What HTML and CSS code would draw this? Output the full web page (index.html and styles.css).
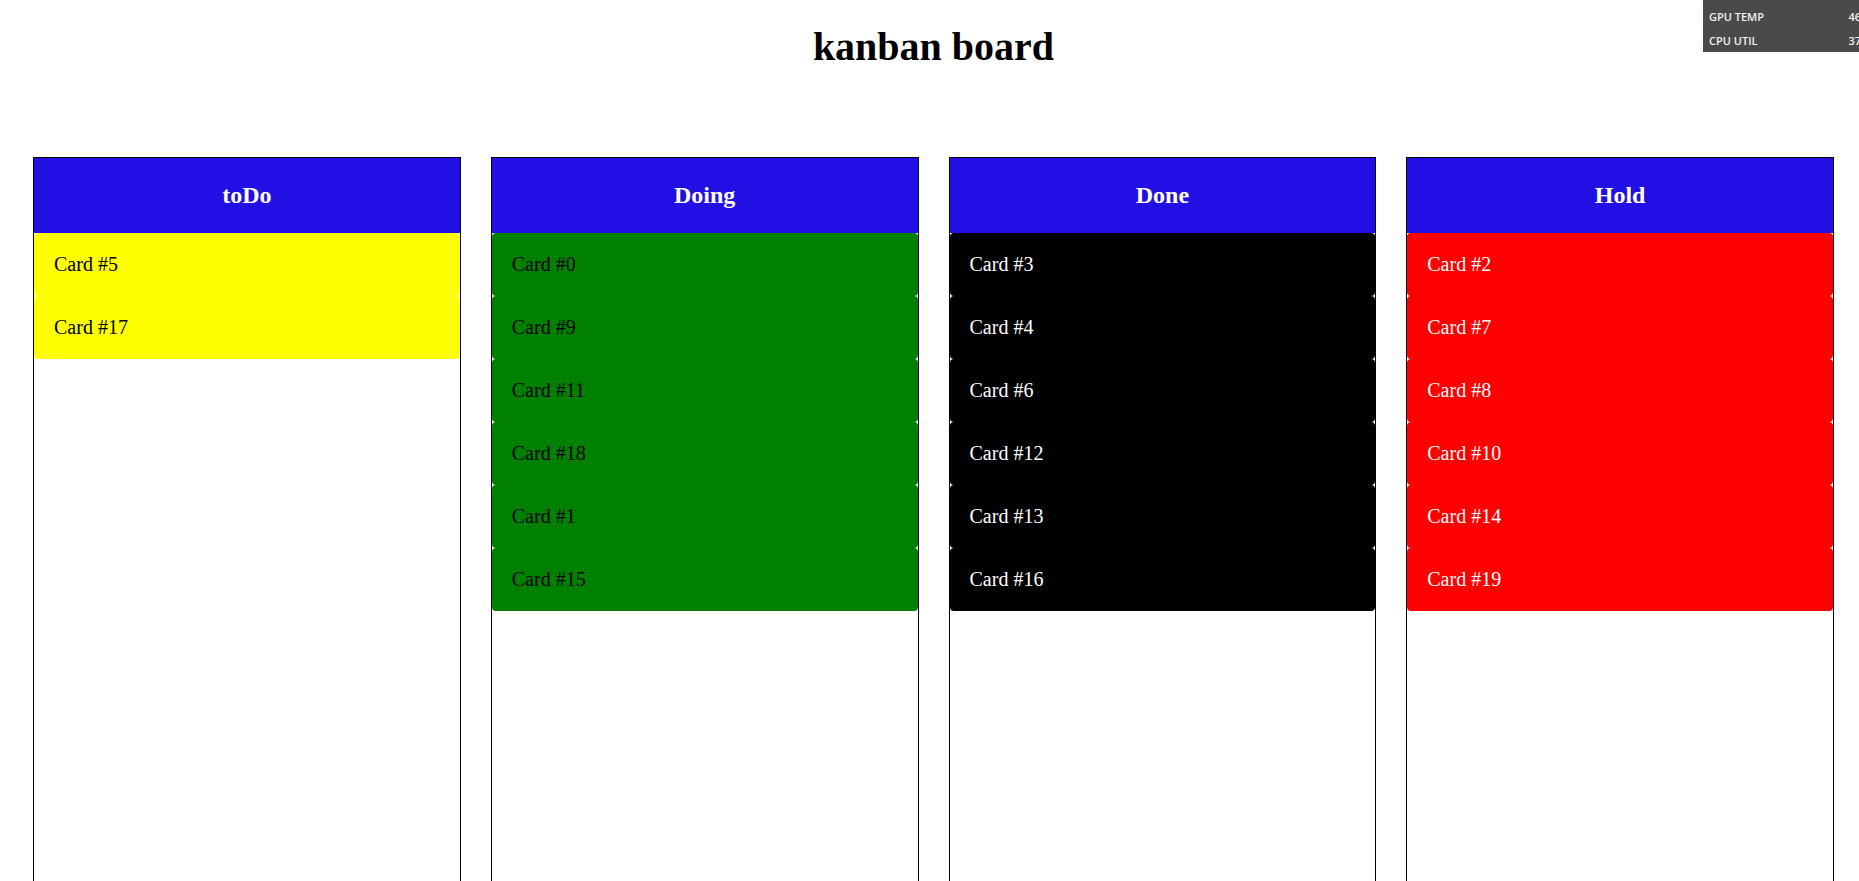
FILE: index.html
```html
<!DOCTYPE html>
<html lang="en">
<head>
<meta charset="utf-8">
<title>kanban board</title>
<link rel="stylesheet" href="styles.css">
</head>
<body>
<div class="page">
  <h1 class="title">kanban board</h1>
  <div class="board">
    <section class="column">
      <h2 class="column-title">toDo</h2>
      <div class="card-list">
        <div class="card card--todo">Card #5</div>
        <div class="card card--todo">Card #17</div>
      </div>
    </section>
    <section class="column">
      <h2 class="column-title">Doing</h2>
      <div class="card-list">
        <div class="card card--doing">Card #0</div>
        <div class="card card--doing">Card #9</div>
        <div class="card card--doing">Card #11</div>
        <div class="card card--doing">Card #18</div>
        <div class="card card--doing">Card #1</div>
        <div class="card card--doing">Card #15</div>
      </div>
    </section>
    <section class="column">
      <h2 class="column-title">Done</h2>
      <div class="card-list">
        <div class="card card--done">Card #3</div>
        <div class="card card--done">Card #4</div>
        <div class="card card--done">Card #6</div>
        <div class="card card--done">Card #12</div>
        <div class="card card--done">Card #13</div>
        <div class="card card--done">Card #16</div>
      </div>
    </section>
    <section class="column">
      <h2 class="column-title">Hold</h2>
      <div class="card-list">
        <div class="card card--hold">Card #2</div>
        <div class="card card--hold">Card #7</div>
        <div class="card card--hold">Card #8</div>
        <div class="card card--hold">Card #10</div>
        <div class="card card--hold">Card #14</div>
        <div class="card card--hold">Card #19</div>
      </div>
    </section>
  </div>
</div>
<aside class="hw-overlay">
  <div class="hw-row"><span>GPU TEMP</span><span>46</span></div>
  <div class="hw-row"><span>CPU UTIL</span><span>37</span></div>
</aside>
</body>
</html>
```
FILE: styles.css
```css
html, body {
  margin: 0;
  height: 100%;
  overflow: hidden;
  background: #ffffff;
}

body {
  font-family: "Liberation Serif", "Times New Roman", serif;
  color: #000000;
}

.page {
  padding: 24px 25px 0 33px;
}

.title {
  margin: 0;
  font-size: 40px;
  line-height: 46px;
  font-weight: bold;
  text-align: center;
}

.board {
  margin-top: 87px;
  display: grid;
  grid-template-columns: repeat(4, 1fr);
  column-gap: 30px;
}

.column {
  border: 1px solid #000000;
  border-bottom: none;
  height: 724px;
}

.column-title {
  margin: 0;
  height: 75px;
  display: flex;
  align-items: center;
  justify-content: center;
  background: #220fe3;
  color: #ffffff;
  font-size: 24px;
  line-height: 27px;
  font-weight: bold;
}

.card {
  padding: 20px;
  font-size: 20px;
  line-height: 23px;
  border-radius: 4px;
}

.card--todo {
  background: #ffff00;
  color: #000000;
}

.card--doing {
  background: #008000;
  color: #000000;
}

.card--done {
  background: #000000;
  color: #ffffff;
}

.card--hold {
  background: #ff0000;
  color: #ffffff;
}

.hw-overlay {
  position: fixed;
  top: 0;
  left: 1703px;
  width: 170px;
  height: 52px;
  box-sizing: border-box;
  padding: 5px 12px 0 6px;
  background: #4a4a4a;
  color: #f2f2f2;
  font-family: "Open Sans", "Noto Sans", sans-serif;
  font-weight: 600;
  font-size: 11px;
  overflow: hidden;
}

.hw-row {
  display: flex;
  justify-content: space-between;
  line-height: 24px;
}
```
